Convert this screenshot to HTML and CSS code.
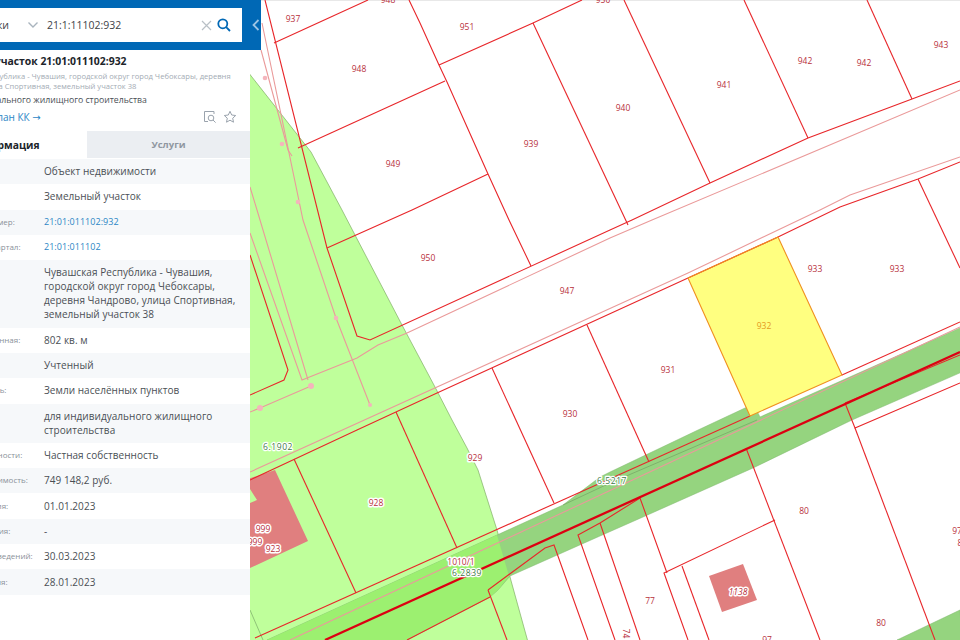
FILE: index.html
```html
<!DOCTYPE html>
<html lang="ru">
<head>
<meta charset="utf-8">
<title>Публичная кадастровая карта</title>
<link rel="stylesheet" href="styles.css">
</head>
<body>
<div class="app">
  <aside class="side">
    <div class="inner">
      <header class="head">
        <div class="search">
          <div class="select"><span>Участки</span>
            <svg class="chev" width="12" height="8" viewBox="0 0 12 8"><path d="M1.500 1.500 6 6l4.500-4.500"/></svg>
          </div>
          <div class="query">21:1:11102:932</div>
          <svg class="clear" width="11" height="11" viewBox="0 0 11 11"><path d="M1 1l9 9M10 1l-9 9"/></svg>
          <svg class="find" width="14" height="14" viewBox="0 0 14 14"><circle cx="5.800" cy="5.800" r="4.500"/><path d="M9.200 9.200 13 13"/></svg>
        </div>
      </header>
      <section class="card">
        <h1 class="title">Земельный участок 21:01:011102:932</h1>
        <p class="addr">Чувашская Республика - Чувашия, городской округ город Чебоксары, деревня Чандрово, улица Спортивная, земельный участок 38</p>
        <p class="use">для индивидуального жилищного строительства</p>
        <div class="actions">
          <a class="plan">План КК <span class="arrow">→</span></a>
          <svg class="act" width="14" height="14" viewBox="0 0 14 14"><path d="M11 4V1.500H1.500V11.500H5"/><circle cx="8" cy="8" r="2.800"/><path d="M10 10l2.600 2.600"/></svg>
          <svg class="act star" width="14" height="14" viewBox="0 0 14 14"><path d="M7 1.300 8.700 5l4 .5-3 2.700.8 4L7 10.200 3.500 12.200l.8-4-3-2.700 4-.5z"/></svg>
        </div>
      </section>
      <nav class="tabs">
        <div class="tab on">Информация</div>
        <div class="tab">Услуги</div>
      </nav>
      <div class="rows">
        <div class="row"><span class="k">Тип:</span><span class="v">Объект недвижимости</span></div>
        <div class="row"><span class="k">Вид:</span><span class="v">Земельный участок</span></div>
        <div class="row"><span class="k">Кадастровый номер:</span><a class="v link">21:01:011102:932</a></div>
        <div class="row"><span class="k">Кадастровый квартал:</span><a class="v link">21:01:011102</a></div>
        <div class="row"><span class="k">Адрес:</span><span class="v">Чувашская Республика - Чувашия, городской округ город Чебоксары, деревня Чандрово, улица Спортивная, земельный участок 38</span></div>
        <div class="row"><span class="k">Площадь уточненная:</span><span class="v">802 кв. м</span></div>
        <div class="row"><span class="k">Статус:</span><span class="v">Учтенный</span></div>
        <div class="row"><span class="k">Категория земель:</span><span class="v">Земли населённых пунктов</span></div>
        <div class="row"><span class="k">Разрешенное:</span><span class="v">для индивидуального жилищного строительства</span></div>
        <div class="row"><span class="k">Форма собственности:</span><span class="v">Частная собственность</span></div>
        <div class="row"><span class="k">Кадастровая стоимость:</span><span class="v">749 148,2 руб.</span></div>
        <div class="row"><span class="k">Дата определения:</span><span class="v">01.01.2023</span></div>
        <div class="row"><span class="k">Дата прекращения:</span><span class="v">-</span></div>
        <div class="row"><span class="k">Дата внесения сведений:</span><span class="v">30.03.2023</span></div>
        <div class="row"><span class="k">Дата образования:</span><span class="v">28.01.2023</span></div>
      </div>
    </div>
    <button class="toggle" aria-label="Свернуть"><svg width="8" height="12" viewBox="0 0 8 12"><path d="M6.500 1 1.500 6l5 5"/></svg></button>
  </aside>
  <main class="map">
    <svg class="canvas" width="710" height="640" viewBox="250 0 710 640">
      <rect class="topline" x="250" y="0" width="710" height="1"/>
      <polygon class="land" points="248,72 311,152 342,210 355,235 402,325 435,387 452,420 467,448 478,470 497,530 510,577 528,642 248,642"/>
      <polygon class="band" points="962,327 760,417 754,405 745,408 698,430 610,472 600,477 563,505 497,535 267,640 407,640 490,597 498,590 510,576 600,536 643,517 753,468 852,420 962,372"/>
      <polygon class="band2" points="497,535 267,640 407,640 490,597 498,590 509,576"/>
      <polygon class="band" points="897,640 960,610 962,642"/>
      <polygon class="mix" points="747,407 757,403 760,412 750,416"/>
      <polygon class="build" points="248,479 275,470 308,541 248,569 248,504 257,500 248,486"/>
      <polygon class="build" points="709,576 743,564 757,600 722,612"/>
      <polygon class="parcel" points="688,278 778,237 842,375 750,416"/>

      <g class="pink">
        <polyline points="262,23 303,220 336,318 370,405"/>
        <polyline points="261,50 288,150 292,156"/>
        <polyline points="250,187 257,210 308,380"/>
        <polyline points="250,233 302,380 357,358 378,345 407,333 610,238 652,220 960,90"/>
        <polyline points="250,412 260,408 311,386"/>
        <polyline points="250,472 688,273 820,210 850,195 960,157"/>
        <polyline points="290,640 960,327"/>
      </g>
      <g class="dots">
        <circle cx="265" cy="78" r="2.300"/><circle cx="282" cy="144" r="2.300"/><circle cx="298" cy="202" r="2.300"/>
        <circle cx="336" cy="318" r="2.300"/><circle cx="370" cy="405" r="2"/><circle cx="311" cy="386" r="3"/><circle cx="260" cy="408" r="3"/>
      </g>
      <polyline class="olive" points="250,610 263,640"/>
      <polyline class="olive" points="563,505 610,483 757,420"/>
      <g class="red">
        <polyline points="265,0 327,248 357,336 370,340 610,230 632,220 710,183 808,138 912,99 960,81"/>
        <polyline points="274,43 368,0"/>
        <polyline points="298,148 445,81"/>
        <polyline points="409,0 420,23 439,65 447,82 488,174 509,220 531,266"/>
        <polyline points="439,65 533,23 582,0"/>
        <polyline points="533,23 628,225"/>
        <polyline points="488,174 412,210 327,248"/>
        <polyline points="624,0 710,183"/>
        <polyline points="744,0 808,138"/>
        <polyline points="867,0 912,99"/>
        <polyline points="960,162 918,179 840,207 778,237 688,278 437,393 357,430 250,480"/>
        <polyline points="918,179 960,268"/>
        <polyline points="587,325 649,462"/>
        <polyline points="492,368 554,503"/>
        <polyline points="396,412 457,548"/>
        <polyline points="294,459 356,593"/>
        <polyline points="255,638 750,416"/>
        <polyline points="842,375 960,322"/>
        <polyline points="250,255 288,370 284,380 250,395"/>
        <polyline points="845,403 960,355"/>
        <polyline points="845,403 855,428 960,383"/>
        <polyline points="855,428 935,640"/>
        <polyline points="488,590 545,548 554,545 588,640"/>
        <polyline points="488,590 507,640"/>
        <polyline points="407,640 490,597"/>
        <polyline points="615,640 578,535 600,523 640,498 667,573"/>
        <polyline points="600,523 640,640"/>
        <polyline points="688,640 664,573 775,520"/>
        <polyline points="682,566 709,640"/>
        <polyline points="746,448 820,640"/>
      </g>
      <polyline class="thick" points="325,640 960,352"/>
      <polyline class="orange" points="688,278 778,237 842,375 750,416 688,278"/>

      <g class="num">
        <text x="293" y="22">937</text><text x="359" y="72">948</text><text x="393" y="167">949</text>
        <text x="388" y="3">948</text><text x="603" y="3">950</text>
        <text x="467" y="30">951</text><text x="531" y="147">939</text><text x="623" y="111">940</text>
        <text x="724" y="88">941</text><text x="805" y="64">942</text><text x="864" y="66">942</text>
        <text x="941" y="48">943</text><text x="428" y="261">950</text><text x="567" y="294">947</text>
        <text x="570" y="417">930</text><text x="668" y="373">931</text>
        <text x="815" y="272">933</text><text x="897" y="272">933</text>
        <text x="804" y="514">80</text><text x="881" y="626">80</text><text x="650" y="604">77</text>
        <text x="957" y="534">97</text><text x="960" y="546">8</text><text x="767" y="643">97</text>
        <text class="turn" x="626" y="637">74</text>
      </g>
      <text class="num self" x="764" y="329">932</text>
      <g class="num halo">
        <text x="475" y="461">929</text><text x="376" y="506">928</text><text x="461" y="565">1010/1</text>
        <text x="263" y="532">999</text><text x="255" y="545">999</text><text x="273" y="552">923</text>
        <text class="it" x="738" y="595">1138</text>
      </g>
      <g class="zone">
        <text x="278" y="450">6.1902</text><text x="467" y="576">6.2839</text><text x="612" y="484">6.5217</text>
      </g>
    </svg>
  </main>
</div>
</body>
</html>
```

FILE: styles.css
```css
* { box-sizing: border-box; }
html, body { margin: 0; height: 100%; overflow: hidden; background: #fff; }
body { font-family: "Open Sans", "Noto Sans", sans-serif; color: #4a4f55; }
.app { display: flex; width: 960px; height: 640px; }

.side { position: relative; flex: 0 0 250px; width: 250px; background: #fff; }
.inner { width: 334px; margin-left: -84px; height: 640px; overflow: hidden; }

.head { height: 50px; background: #0068b5; padding: 8px 8px 8px 12px; }
.search { display: flex; align-items: center; height: 34px; background: #fff; padding-right: 11px; font-size: 10.500px; color: #3f4347; }
.select { display: flex; align-items: center; justify-content: flex-end; gap: 18px; width: 111px; margin-right: 8px; }
.chev path { fill: none; stroke: #a9b4be; stroke-width: 1.400; }
.query { flex: 1; }
.clear { margin-right: 5px; }
.clear path { fill: none; stroke: #b9c0c6; stroke-width: 1.200; }
.find circle, .find path { fill: none; stroke: #0068b5; stroke-width: 1.800; }

.card { padding: 3px 0 0 12px; height: 81px; }
.title { margin: 0; font-size: 10.400px; line-height: 16px; font-weight: 700; color: #20242a; }
.addr { margin: 3px 0 0 12px; width: 300px; font-size: 7.600px; line-height: 9.500px; color: #a3abb4; }
.use { margin: 2px 0 0 10px; font-size: 8.700px; line-height: 14px; color: #4a4f55; }
.actions { display: flex; align-items: center; gap: 6px; margin-top: 3px; height: 14px; padding-right: 13px; }
.plan { font-size: 10px; color: #2b86c5; margin-right: auto; padding-left: 62px; }
.arrow { font-family: "DejaVu Sans", sans-serif; }
.act path, .act circle { fill: none; stroke: #9aa3ad; stroke-width: 1; }

.tabs { display: flex; height: 27px; font-size: 9.500px; font-weight: 700; }
.tab { flex: 1; display: flex; align-items: center; justify-content: center; background: #ebeef2; color: #8f97a0; }
.tab.on { flex: 0 0 171px; padding-left: 4px; font-size: 10.300px; background: #fff; color: #20242a; }

.rows { margin-top: 1px; }
.row { display: flex; padding: 5.170px 0 6.170px 12px; font-size: 10px; line-height: 14px; }
.row:nth-child(odd) { background: #f6f8fa; }
.k { flex: 0 0 110px; margin-left: 6px; font-size: 8px; color: #8a9199; white-space: nowrap; overflow: hidden; }
.v { flex: 0 0 196px; color: #4a4f55; letter-spacing: .04px; }
.link { font-size: 9px; color: #2b86c5; }

.toggle { position: absolute; left: 250px; top: 0; width: 11px; height: 50px; padding: 0; border: 0; background: #0068b5; display: flex; align-items: center; justify-content: center; }
.toggle path { fill: none; stroke: #9cc4e4; stroke-width: 1.800; }

.map { flex: 1; height: 640px; background: #fff; }
.canvas { display: block; }
.topline { fill: #e8e8e8; }
.land { fill: #bfff9b; stroke: #7fae66; stroke-width: .7; }
.band { fill: #95d47f; stroke: #7fb66c; stroke-width: .5; }
.band2 { fill: #9cf070; stroke: none; }
.mix { fill: #c8e040; }
.build { fill: #e07f7f; }
.parcel { fill: #ffff80; }
.pink polyline { fill: none; stroke: #ea9a9a; stroke-width: 1.100; }
.dots circle { fill: #f4b5bc; }
.olive { fill: none; stroke: #6e9a60; stroke-width: .6; }
.red polyline { fill: none; stroke: #e8262a; stroke-width: 1.100; }
.thick { fill: none; stroke: #dc0012; stroke-width: 2.300; }
.orange { fill: none; stroke: #f09020; stroke-width: 1.100; }

.num text, .num.self { font-family: "Open Sans", sans-serif; font-size: 8.500px; fill: #b8303c; text-anchor: middle; }
.num.self { fill: #e49a20; }
.halo text { paint-order: stroke; stroke: #fff; stroke-width: 3px; stroke-linejoin: round; }
.halo .it { font-style: italic; }
.zone text { font-family: "Open Sans", sans-serif; font-size: 8.500px; fill: #3f7a48; text-anchor: middle; letter-spacing: .6px; paint-order: stroke; stroke: #fff; stroke-width: 2.500px; stroke-linejoin: round; }
.turn { transform-box: fill-box; transform-origin: center; transform: rotate(90deg); }
```
